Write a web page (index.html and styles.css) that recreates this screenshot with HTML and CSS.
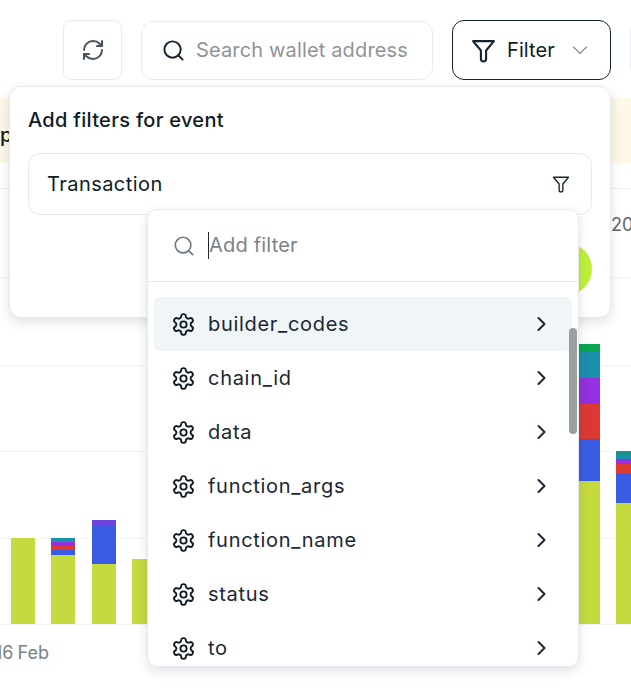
FILE: index.html
```html
<!DOCTYPE html>
<html lang="en">
<head>
<meta charset="utf-8">
<title>Events</title>
<link rel="stylesheet" href="styles.css">
</head>
<body>
<div class="page">
  <header class="toolbar">
    <button class="btn-refresh" aria-label="Refresh">
      <svg class="ic-refresh" viewBox="0 0 24 24"><path d="M3 12a9 9 0 0 1 9-9 9.75 9.75 0 0 1 6.74 2.74L21 8"/><path d="M21 3v5h-5"/><path d="M21 12a9 9 0 0 1-9 9 9.75 9.75 0 0 1-6.74-2.74L3 16"/><path d="M8 16H3v5"/></svg>
    </button>
    <div class="search">
      <svg class="ic-search" viewBox="0 0 24 24"><circle cx="11" cy="11" r="8.5"/><path d="m17.5 17.5 4 4"/></svg>
      <span class="search-text">Search wallet address</span>
    </div>
    <button class="btn-filter">
      <svg class="ic-funnel" viewBox="0 0 24 24"><path d="M2 3h20l-7.5 9v8a2.5 2.5 0 0 1-5 0v-8z"/></svg>
      <span class="filter-label">Filter</span>
      <svg class="ic-caret" viewBox="0 0 18 18"><path d="m2.500 6 6.500 6.500 6.500-6.500"/></svg>
    </button>
    <div class="btn-next"></div>
  </header>

  <div class="banner">p</div>
  <div class="row-head"><span class="row-num">20</span></div>

  <div class="plot">
    <div class="bar" style="height:86px"><i class="lime" style="height:86px"></i></div>
    <div class="bar" style="height:86px"><i class="teal" style="height:4px"></i><i class="purple" style="height:4px"></i><i class="red" style="height:4px"></i><i class="blue" style="height:5px"></i><i class="lime" style="height:69px"></i></div>
    <div class="bar" style="height:104px"><i class="violet" style="height:5px"></i><i class="blue" style="height:38.500px"></i><i class="lime" style="height:60.500px"></i></div>
    <div class="bar" style="height:65px"><i class="lime" style="height:65px"></i></div>
    <div class="bar" style="height:65px"><i class="lime" style="height:65px"></i></div>
    <div class="bar" style="height:65px"><i class="lime" style="height:65px"></i></div>
    <div class="bar" style="height:65px"><i class="lime" style="height:65px"></i></div>
    <div class="bar" style="height:65px"><i class="lime" style="height:65px"></i></div>
    <div class="bar" style="height:65px"><i class="lime" style="height:65px"></i></div>
    <div class="bar" style="height:65px"><i class="lime" style="height:65px"></i></div>
    <div class="bar" style="height:65px"><i class="lime" style="height:65px"></i></div>
    <div class="bar" style="height:65px"><i class="lime" style="height:65px"></i></div>
    <div class="bar" style="height:65px"><i class="lime" style="height:65px"></i></div>
    <div class="bar" style="height:65px"><i class="lime" style="height:65px"></i></div>
    <div class="bar" style="height:280.500px"><i class="green" style="height:8.500px"></i><i class="teal" style="height:26px"></i><i class="purple" style="height:26px"></i><i class="red" style="height:34.500px"></i><i class="blue" style="height:42.500px"></i><i class="lime" style="height:143px"></i></div>
    <div class="bar" style="height:173px"><i class="seagreen" style="height:4px"></i><i class="teal" style="height:4px"></i><i class="purple" style="height:5px"></i><i class="red" style="height:9px"></i><i class="blue" style="height:30px"></i><i class="lime" style="height:121px"></i></div>
  </div>
  <div class="axis">16 Feb</div>

  <section class="panel">
    <h2 class="panel-title">Add filters for event</h2>
    <div class="event-box">
      <span>Transaction</span>
      <svg class="ic-funnel-small" viewBox="0 0 24 24"><path d="M2 3h20l-7.500 9v8a2.500 2.500 0 0 1-5 0v-8z"/></svg>
    </div>
    <div class="panel-actions"><span class="apply"></span></div>

    <div class="dropdown">
      <div class="dd-search">
        <svg class="ic-dd-search" viewBox="0 0 24 24"><circle cx="11" cy="11" r="8.500"/><path d="m17.500 17.500 4 4"/></svg>
        <span class="dd-input">Add filter</span>
      </div>
      <ul class="dd-list">
        <li class="dd-item active"><svg class="ic-gear" viewBox="0 0 24 24"><use href="#gear"/></svg><span>builder_codes</span><svg class="ic-chev" viewBox="0 0 12 18"><path d="m2.500 3 6 6-6 6"/></svg></li>
        <li class="dd-item"><svg class="ic-gear" viewBox="0 0 24 24"><use href="#gear"/></svg><span>chain_id</span><svg class="ic-chev" viewBox="0 0 12 18"><path d="m2.500 3 6 6-6 6"/></svg></li>
        <li class="dd-item"><svg class="ic-gear" viewBox="0 0 24 24"><use href="#gear"/></svg><span>data</span><svg class="ic-chev" viewBox="0 0 12 18"><path d="m2.500 3 6 6-6 6"/></svg></li>
        <li class="dd-item"><svg class="ic-gear" viewBox="0 0 24 24"><use href="#gear"/></svg><span>function_args</span><svg class="ic-chev" viewBox="0 0 12 18"><path d="m2.500 3 6 6-6 6"/></svg></li>
        <li class="dd-item"><svg class="ic-gear" viewBox="0 0 24 24"><use href="#gear"/></svg><span>function_name</span><svg class="ic-chev" viewBox="0 0 12 18"><path d="m2.500 3 6 6-6 6"/></svg></li>
        <li class="dd-item"><svg class="ic-gear" viewBox="0 0 24 24"><use href="#gear"/></svg><span>status</span><svg class="ic-chev" viewBox="0 0 12 18"><path d="m2.500 3 6 6-6 6"/></svg></li>
        <li class="dd-item"><svg class="ic-gear" viewBox="0 0 24 24"><use href="#gear"/></svg><span>to</span><svg class="ic-chev" viewBox="0 0 12 18"><path d="m2.500 3 6 6-6 6"/></svg></li>
      </ul>
      <div class="scroll-thumb"></div>
    </div>
  </section>

  <svg class="defs" aria-hidden="true"><defs><g id="gear"><path d="M12.220 2h-.44a2 2 0 0 0-2 2v.18a2 2 0 0 1-1 1.730l-.43.250a2 2 0 0 1-2 0l-.15-.08a2 2 0 0 0-2.730.730l-.22.380a2 2 0 0 0 .730 2.730l.15.100a2 2 0 0 1 1 1.720v.510a2 2 0 0 1-1 1.740l-.15.090a2 2 0 0 0-.730 2.730l.22.380a2 2 0 0 0 2.730.730l.15-.08a2 2 0 0 1 2 0l.43.250a2 2 0 0 1 1 1.730V20a2 2 0 0 0 2 2h.44a2 2 0 0 0 2-2v-.18a2 2 0 0 1 1-1.730l.43-.25a2 2 0 0 1 2 0l.15.08a2 2 0 0 0 2.730-.730l.22-.39a2 2 0 0 0-.730-2.730l-.15-.08a2 2 0 0 1-1-1.740v-.5a2 2 0 0 1 1-1.740l.15-.09a2 2 0 0 0 .730-2.730l-.22-.38a2 2 0 0 0-2.730-.730l-.15.08a2 2 0 0 1-2 0l-.43-.25a2 2 0 0 1-1-1.730V4a2 2 0 0 0-2-2z"/><circle cx="12" cy="12" r="3"/></g></defs></svg>
</div>
</body>
</html>
```
FILE: styles.css
```css
* { box-sizing: border-box; }
html, body { margin: 0; padding: 0; background: #fff; }
body { font-family: Inter, "Liberation Sans", sans-serif; color: #0f1b25; }
svg { fill: none; stroke-linecap: round; stroke-linejoin: round; flex: none; }
.defs { width: 0; height: 0; display: block; }

.page { position: relative; width: 631px; height: 695px; overflow: hidden; }

.toolbar { display: flex; align-items: center; gap: 19px; padding: 20px 0 0 63px; width: 800px; height: 80px; }
.btn-refresh { width: 59px; height: 60px; border: 1px solid #e8eaed; border-radius: 8px; background: #fff; display: flex; align-items: center; justify-content: center; padding: 0; }
.ic-refresh { width: 24px; height: 24px; stroke: #47525c; stroke-width: 2; }
.search { width: 292px; height: 59px; border: 1px solid #e8eaed; border-radius: 12px; display: flex; align-items: center; padding-left: 20px; gap: 11px; }
.ic-search { width: 23px; height: 23px; stroke: #13242f; stroke-width: 2; }
.search-text { font-size: 20px; color: #8f9399; white-space: nowrap; letter-spacing: 0.15px; }
.btn-filter { width: 159px; height: 60px; border: 1px solid #122530; border-radius: 12px; background: #fff; display: flex; align-items: center; padding: 0 0 0 18px; font: inherit; color: inherit; }
.ic-funnel { width: 25px; height: 25px; stroke: #13242f; stroke-width: 2; }
.filter-label { font-size: 20px; margin-left: 11px; letter-spacing: 0.1px; }
.ic-caret { width: 18px; height: 18px; stroke: #8f9399; stroke-width: 1.400; margin-left: 16px; }
.btn-next { width: 60px; height: 60px; border: 1px solid #e8eaed; border-radius: 12px; flex: none; }

.banner { margin-top: 18px; height: 65px; background: #fdf8e8; font-size: 20px; font-weight: 500; line-height: 74px; overflow: hidden; }
.row-head { margin-top: 25px; height: 90px; border-top: 1px solid #eef0f3; border-bottom: 1px solid #f0f2f5; padding-top: 25px; white-space: nowrap; }
.row-num { display: block; margin-left: 611px; font-size: 18px; color: #5d646c; text-align: left; width: 40px; }

.plot { margin-top: 87px; height: 260px; display: flex; align-items: flex-end; gap: 16.330px; padding-left: 11px; background: repeating-linear-gradient(to bottom, #f1f3f5 0 1px, transparent 1px 86.400px); border-bottom: 1px solid #f1f3f5; }
.bar { width: 24px; flex: none; display: flex; flex-direction: column; }
.bar i { display: block; flex: none; }
.lime { background: #c4da3f; }
.blue { background: #3a5ce5; }
.red { background: #db3a33; }
.purple { background: #9531e0; }
.violet { background: #6d43dc; }
.teal { background: #1c8fad; }
.green { background: #0aa74f; }
.seagreen { background: #13918a; }
.axis { margin: 17px 0 0 -5px; font-size: 18px; color: #7a8088; white-space: nowrap; word-spacing: -1px; }

.panel { position: absolute; left: 9px; top: 86px; width: 602px; height: 232px; background: #fff; border: 1px solid #e6e9ee; border-radius: 12px; box-shadow: 0 4px 12px rgba(30, 40, 60, 0.14); padding: 21px 18px 0; }
.panel-title { margin: 0; font-size: 20px; font-weight: 500; line-height: 24px; letter-spacing: 0.3px; }
.event-box { margin-top: 21px; height: 62px; border: 1px solid #e6e9ee; border-radius: 12px; display: flex; align-items: center; justify-content: space-between; padding: 0 21px 0 18px; font-size: 20px; letter-spacing: 0.45px; }
.ic-funnel-small { width: 18px; height: 18px; stroke: #13242f; stroke-width: 1.800; }
.panel-actions { display: flex; justify-content: flex-end; margin-top: 28px; }
.apply { width: 110px; height: 52px; border-radius: 26px; background: #bef03a; }

.dropdown { position: absolute; left: 137px; top: 122px; width: 432px; height: 458px; background: #fff; border: 1px solid #e6e9ee; border-radius: 10px; box-shadow: 0 4px 12px rgba(30, 40, 60, 0.14); overflow: hidden; }
.dd-search { height: 72px; border-bottom: 1px solid #e6e9ee; display: flex; align-items: center; padding-left: 25px; gap: 13px; }
.ic-dd-search { width: 22px; height: 22px; stroke: #6e7781; stroke-width: 1.800; }
.dd-input { font-size: 20px; color: #7a828b; border-left: 1px solid #1b2a35; line-height: 27px; letter-spacing: 0.2px; }
.dd-list { list-style: none; margin: 15px 0 0; padding: 0 6px; }
.dd-item { height: 54px; display: flex; align-items: center; padding: 0 24px 0 17px; border-radius: 6px; font-size: 20px; color: #1a2733; letter-spacing: 0.7px; }
.dd-item.active { background: #f0f5f8; }
.dd-item span { flex: 1; margin-left: 12px; }
.ic-gear { width: 25px; height: 25px; stroke: #0f1b25; stroke-width: 1.800; }
.ic-chev { width: 12px; height: 18px; stroke: #1a2733; stroke-width: 2; }
.scroll-thumb { position: absolute; left: 421px; top: 118px; width: 8px; height: 106px; border-radius: 4px; background: #9a9fa2; }
```
